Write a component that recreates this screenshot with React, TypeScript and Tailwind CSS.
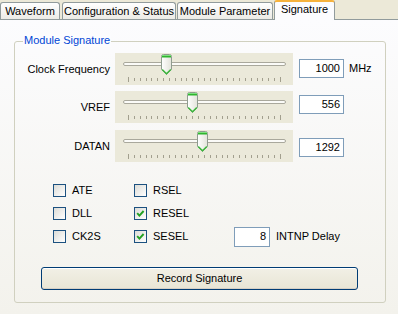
import React from 'react'

const FONT = { fontFamily: '"Liberation Sans", Arial, sans-serif' }

const TABS = [
  { name: 'Waveform', width: 60 },
  { name: 'Configuration & Status', width: 114 },
  { name: 'Module Parameter', width: 96 },
  { name: 'Signature', width: 61, active: true },
]

const SLIDERS = [
  { label: 'Clock Frequency', value: '1000', thumb: 46, unit: 'MHz', boxTop: 6 },
  { label: 'VREF', value: '556', thumb: 72, unit: '', boxTop: 4 },
  { label: 'DATAN', value: '1292', thumb: 82, unit: '', boxTop: 8 },
]

// tick marks of the trackbar, from x=13 to x=165
const TICKS = Array.from({ length: 27 }, (_, i) => Math.round(13 + (i * 152) / 26))

function Thumb({ x }: { x: number }) {
  return (
    <g transform={`translate(${x} 1)`}>
      <path
        d="M0.5,2.5 Q0.5,0.5 2.5,0.5 H8.5 Q10.5,0.5 10.5,2.5 V15.5 L5.5,20.5 L0.5,15.5 Z"
        fill="url(#thumbFill)"
        stroke="#8F9C8F"
      />
      <rect x="1" y="1" width="9" height="1" fill="#7EE07E" />
      <rect x="1" y="2" width="9" height="1.5" fill="#2FB52F" />
      <polyline points="1.2,15.6 5.5,19.8 9.8,15.6" fill="none" stroke="#3CB83C" strokeWidth="1.4" />
    </g>
  )
}

function Trackbar({ thumb }: { thumb: number }) {
  return (
    <svg width="178" height="32" className="block bg-[#EBE9DA]">
      <defs>
        <linearGradient id="thumbFill" x1="0" y1="0" x2="1" y2="0">
          <stop offset="0" stopColor="#FFFFFF" />
          <stop offset="1" stopColor="#E3E3DB" />
        </linearGradient>
      </defs>
      <rect x="8.5" y="9.5" width="162" height="3" rx="1.5" fill="#FBFBF8" stroke="#A9A89C" />
      {TICKS.map((t, i) => {
        const end = i === 0 || i === TICKS.length - 1
        return <rect key={i} x={t} y={end ? 24 : 25} width="1" height={end ? 5 : 3} fill="#A29F8E" />
      })}
      <Thumb x={thumb} />
    </svg>
  )
}

function TextBox({ value, width, height }: { value: string; width: number; height: number }) {
  return (
    <div
      className="flex items-center justify-end border border-[#7F9DB9] bg-white pr-[3px] text-[11px] text-black"
      style={{ width, height }}
    >
      {value}
    </div>
  )
}

function CheckBox({ label, checked, width }: { label: string; checked?: boolean; width: number }) {
  return (
    <div className="flex items-center" style={{ width }}>
      <div className="flex h-[13px] w-[13px] items-center justify-center border border-[#1C5180] bg-gradient-to-br from-[#DCDCD7] to-white">
        {checked && (
          <svg width="11" height="11">
            <polyline points="2.2,5.2 4.4,7.6 8.6,3" fill="none" stroke="#21A121" strokeWidth="1.9" />
          </svg>
        )}
      </div>
      <span className="ml-[6px] text-[11px] leading-[13px]">{label}</span>
    </div>
  )
}

export default function App() {
  return (
    <div className="h-[314px] w-[398px] overflow-hidden bg-[#ECE9D8] text-black" style={FONT}>
      {/* Tabs */}
      <div className="relative z-10 flex h-[19px] items-end">
        {TABS.map((t, i) =>
          t.active ? (
            <div
              key={t.name}
              className="-mb-[1px] ml-[1px] flex h-[20px] items-start justify-center rounded-t-[3px] border-x border-t-2 border-x-[#919B9C] border-t-[#F6B23C] bg-[#FCFCFE] pt-[1px] text-[11px] leading-[13px]"
              style={{ width: t.width }}
            >
              {t.name}
            </div>
          ) : (
            <div
              key={t.name}
              className={`flex h-[17px] items-center justify-center rounded-t-[3px] border-x border-t border-[#919B9C] bg-gradient-to-b from-white to-[#ECEBE6] text-[11px] leading-[13px] ${i === 0 ? '' : i === 1 ? 'ml-[2px]' : 'ml-[1px]'}`}
              style={{ width: t.width }}
            >
              {t.name}
            </div>
          )
        )}
      </div>

      {/* Tab page */}
      <div className="h-[295px] border-t border-[#919B9C] bg-gradient-to-b from-[#FCFCFE] to-[#F3F2EC] pt-[21px]">
        <div className="relative ml-[14px] w-[372px] rounded-[3px] border border-[#D0D0BF] pb-[12px] pt-[11px]">
          <span className="absolute left-[8px] top-[-8px] bg-[#FCFCFE] px-[1px] text-[11px] leading-[13px] text-[#0046D5]">
            Module Signature
          </span>

          {/* Slider rows */}
          <div className="flex flex-col">
            {SLIDERS.map((s, i) => (
              <div key={s.label} className={`flex items-start ${i === 1 ? 'mt-[6px]' : i === 2 ? 'mt-[7px]' : ''}`}>
                <div className="flex h-[32px] w-[95px] items-center justify-end text-[11px]">{s.label}</div>
                <div className="ml-[5px]">
                  <Trackbar thumb={s.thumb} />
                </div>
                <div className="ml-[6px] flex items-center" style={{ marginTop: s.boxTop }}>
                  <TextBox value={s.value} width={45} height={19} />
                  {s.unit && <span className="ml-[5px] text-[11px]">{s.unit}</span>}
                </div>
              </div>
            ))}
          </div>

          {/* Check boxes */}
          <div className="mt-[22px] flex flex-col gap-[10px] pl-[38px]">
            <div className="flex h-[13px] items-center">
              <CheckBox label="ATE" width={81} />
              <CheckBox label="RSEL" width={100} />
            </div>
            <div className="flex h-[13px] items-center">
              <CheckBox label="DLL" width={81} />
              <CheckBox label="RESEL" checked width={100} />
            </div>
            <div className="flex h-[13px] items-center">
              <CheckBox label="CK2S" width={81} />
              <CheckBox label="SESEL" checked width={100} />
              <TextBox value="8" width={36} height={20} />
              <span className="ml-[6px] text-[11px]">INTNP Delay</span>
            </div>
          </div>

          {/* Button */}
          <button className="ml-[26px] mt-[24px] flex h-[23px] w-[317px] items-center justify-center rounded-[3px] border border-[#003C74] bg-gradient-to-b from-[#F2F0E6] to-[#E8E5D5] text-[11px] shadow-[inset_0_1px_0_#FFFFFF,inset_0_-1px_0_#D6D0C5]">
            Record Signature
          </button>
        </div>
      </div>
    </div>
  )
}
